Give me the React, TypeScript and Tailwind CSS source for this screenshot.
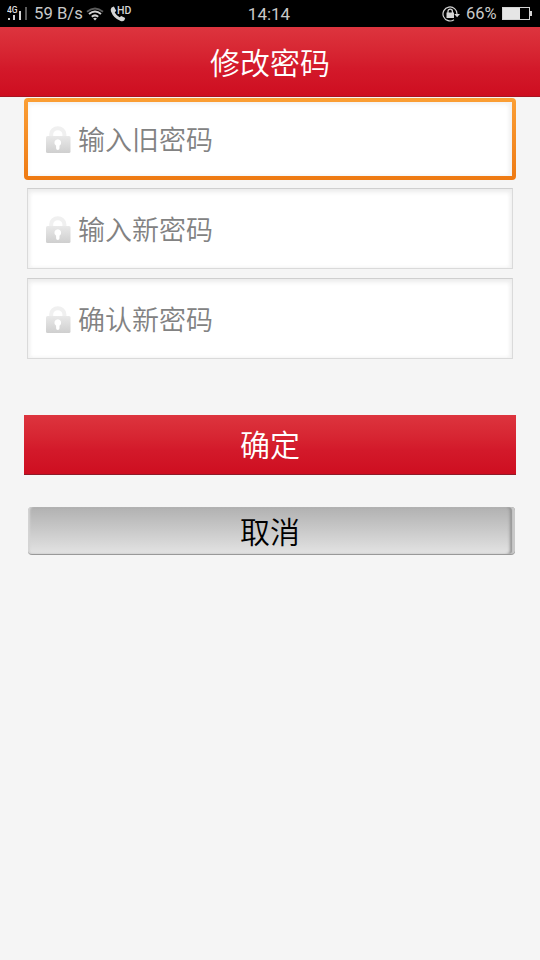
import React from "react";

function SignalIcon() {
  return (
    <svg width="20" height="22" viewBox="0 -3 20 22" className="shrink-0">
      <text x="0" y="6.8" fontSize="8.5" fontWeight="500" fill="#dedede" fontFamily="Roboto, sans-serif">
        4G
      </text>
      <rect x="1" y="12" width="2" height="2" fill="#d4d4d4" />
      <rect x="6" y="9" width="2" height="5" fill="#d4d4d4" />
      <rect x="12" y="5" width="2" height="9" fill="#d4d4d4" />
      <rect x="18" y="1" width="2" height="13" fill="#5c5c5c" />
    </svg>
  );
}

function WifiIcon() {
  return (
    <svg width="18" height="14" viewBox="0 0 18 14" fill="none" className="shrink-0">
      <path d="M1 4.8Q9 -1.8 17 4.8" stroke="#5c5c5c" strokeWidth="1.8" />
      <path d="M3 7Q9 2 15 7" stroke="#d4d4d4" strokeWidth="2" />
      <path d="M5.8 9.8Q9 7 12.2 9.8" stroke="#d4d4d4" strokeWidth="2" />
      <path d="M7.1 11.4Q9 10 10.9 11.4L9 13.6Z" fill="#d4d4d4" />
    </svg>
  );
}

function CallIcon() {
  return (
    <svg width="26" height="22" viewBox="0 -3 26 22" className="shrink-0">
      <path
        d="M1.6 1.4L3.9 .5L6.2 4.8L4.7 6.6Q6.4 9.5 9.6 11.3L11.3 9.9L15.2 12L14.4 14.3Q12.9 15.6 10.6 14.9Q3.5 12.3 .9 5.2Q.2 2.8 1.6 1.4Z"
        fill="#d4d4d4"
      />
      <text x="7" y="8.4" fontSize="10.5" fontWeight="500" fill="#d4d4d4" fontFamily="Roboto, sans-serif">
        HD
      </text>
    </svg>
  );
}

function RotationLockIcon() {
  return (
    <svg width="19" height="16" viewBox="0 0 19 16" fill="none" className="shrink-0">
      <path d="M12 13.7A7 7 0 1 1 15 8.2" stroke="#d4d4d4" strokeWidth="1.2" />
      <path d="M12.2 8H18L15.1 11.2Z" fill="#d4d4d4" />
      <rect x="4.5" y="6.5" width="7.5" height="5.5" fill="#d4d4d4" />
      <path d="M6 7V5.3a2.2 2.2 0 0 1 4.4 0V7" stroke="#d4d4d4" strokeWidth="1.3" />
    </svg>
  );
}

function BatteryIcon() {
  return (
    <svg width="30" height="14" viewBox="0 0 30 14" className="shrink-0">
      <rect x=".5" y=".5" width="27" height="12" fill="none" stroke="#d4d4d4" />
      <rect x="1" y="1" width="17" height="11" fill="#e6e6e6" />
      <rect x="28" y="4" width="2" height="5" fill="#d4d4d4" />
    </svg>
  );
}

function StatusBar() {
  return (
    <div className="grid h-[27px] grid-cols-[1fr_auto_1fr] items-center bg-black text-[17px] leading-[27px] text-[#c9c9c9]">
      <div className="flex items-center pl-[7px]">
        <SignalIcon />
        <span className="ml-[7px] w-[52px] whitespace-nowrap text-[16.7px]">59 B/s</span>
        <WifiIcon />
        <span className="ml-[6px] flex">
          <CallIcon />
        </span>
      </div>
      <span className="mr-[2px] pt-[2px] leading-[25px]">14:14</span>
      <div className="flex items-center justify-end pr-2">
        <RotationLockIcon />
        <span className="ml-[5px] w-[36px] whitespace-nowrap text-[16.5px]">66%</span>
        <BatteryIcon />
      </div>
    </div>
  );
}

function LockIcon() {
  return (
    <svg width="26" height="28" viewBox="0 0 26 28" className="mt-[2px] shrink-0">
      <defs>
        <linearGradient id="lock-body" x1="0" y1="0" x2="0" y2="1">
          <stop offset="0" stopColor="#e9e9e9" />
          <stop offset="1" stopColor="#cfcfcf" />
        </linearGradient>
      </defs>
      <path d="M6.2 11V8.2a6.6 6 0 0 1 13.2 0v2.8" fill="none" stroke="#f0f0f0" strokeWidth="4" />
      <rect x="1" y="10" width="24.5" height="17" rx="1.5" fill="url(#lock-body)" />
      <path d="M12.8 13.2a3.5 3.5 0 0 1 1.7 6.5v2.6a1.7 1.7 0 0 1-3.4 0v-2.6A3.5 3.5 0 0 1 12.8 13.2Z" fill="#fff" />
    </svg>
  );
}

function PasswordField({ label, focused = false }: { label: string; focused?: boolean }) {
  return (
    <div
      className={
        focused
          ? "h-[82px] rounded-[4px] bg-linear-to-b from-[#fb9f35] to-[#ee7a12] p-[4px]"
          : "mx-[3px] h-[81px] border border-[#dadada] border-t-[#cfcfcf] bg-white shadow-[inset_0_3px_5px_#ececec,inset_2px_0_4px_#f6f6f6,inset_-2px_0_4px_#f3f3f3]"
      }
    >
      <label
        className={
          focused
            ? "flex h-full items-center bg-white pl-[17px] shadow-[inset_0_2px_5px_#f2f2f2,inset_-3px_0_4px_#f2f2f2]"
            : "flex h-full items-center pl-[17px]"
        }
      >
        <LockIcon />
        <span
          className={
            focused
              ? "ml-[7px] pt-[3px] text-[27px] leading-[40px] font-[350] text-[#828282]"
              : "ml-[7px] pt-[5px] text-[27px] leading-[40px] font-[350] text-[#828282]"
          }
        >
          {label}
        </span>
      </label>
    </div>
  );
}

export default function App() {
  return (
    <main className="min-h-[960px] w-full bg-[#f5f5f5] font-[Roboto,'Noto_Sans_CJK_SC',sans-serif]">
      <StatusBar />
      <header className="flex h-[70px] items-center justify-center border-b border-[#a81422] bg-linear-to-b from-[#dd343e] via-[#d3192a] via-60% to-[#ce0d20]">
        <h1 className="pt-[5px] text-[30px] leading-[44px] font-[350] text-white">修改密码</h1>
      </header>
      <form className="flex flex-col px-6 pt-px">
        <PasswordField label="输入旧密码" focused />
        <div className="mt-[8px] flex flex-col gap-[9px]">
          <PasswordField label="输入新密码" />
          <PasswordField label="确认新密码" />
        </div>
        <button
          type="button"
          className="mt-[56px] h-[60px] border-b border-[#8e1b28] bg-linear-to-b from-[#dd343e] via-[#d3192a] via-60% to-[#ce0d20] pt-[2px] text-[30px] leading-[57px] font-[350] text-white"
        >
          确定
        </button>
        <button
          type="button"
          className="mt-[32px] mr-px ml-[4px] h-[48px] rounded-[4px] border-b border-b-[#999999] bg-linear-to-b from-[#b1b1b1] to-[#e3e3e3] pt-[4px] pr-[3px] text-[30px] leading-[43px] font-[350] text-black shadow-[inset_3px_0_2px_-1px_#d4d4d4,inset_-3px_0_1px_#c9c9c9,inset_-6px_0_3px_-1px_#909090]"
        >
          取消
        </button>
      </form>
    </main>
  );
}
